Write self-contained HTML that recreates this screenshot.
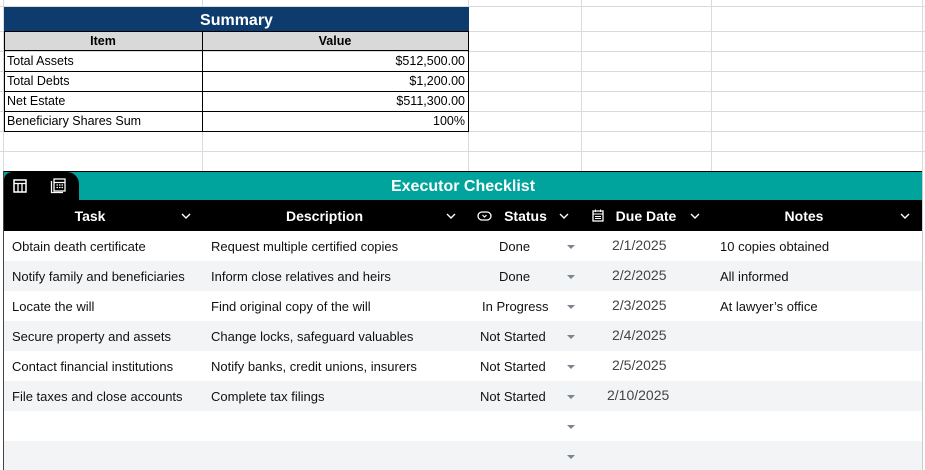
<!DOCTYPE html>
<html><head><meta charset="utf-8"><style>
*{margin:0;padding:0;box-sizing:border-box}
body{width:925px;height:470px;overflow:hidden;background:#fff;font-family:"Liberation Sans",sans-serif;position:relative}
.a{position:absolute}
.vl{position:absolute;top:0;width:1px;height:171px;background:#dadada}
.hl{position:absolute;left:0;width:925px;height:1px;background:#dadada}
.sum{position:absolute;font-size:12.5px;color:#000;line-height:21px;white-space:nowrap}
.hd{position:absolute;top:200px;height:31px;line-height:32px;color:#fff;font-weight:bold;font-size:14px;text-align:center}
.row{position:absolute;left:4px;width:918px;height:30px;font-size:13px;color:#111;line-height:31px}
.row span{position:absolute;white-space:nowrap}
.chev{position:absolute;top:211px;width:12px;height:10px}
.tri{position:absolute;width:0;height:0;border-left:4px solid transparent;border-right:4px solid transparent;border-top:4px solid #7a8590}
</style></head><body>
<div class="vl" style="left:3px"></div>
<div class="vl" style="left:202px"></div>
<div class="vl" style="left:468px"></div>
<div class="vl" style="left:581px"></div>
<div class="vl" style="left:711px"></div>
<div class="vl" style="left:922px"></div>
<div class="hl" style="top:6px"></div>
<div class="hl" style="top:31px"></div>
<div class="hl" style="top:51px"></div>
<div class="hl" style="top:71px"></div>
<div class="hl" style="top:91px"></div>
<div class="hl" style="top:111px"></div>
<div class="hl" style="top:131px"></div>
<div class="hl" style="top:151px"></div>

<div class="a" style="left:4px;top:7px;width:465px;height:24px;background:#0e3b6e;color:#fff;font-weight:bold;font-size:16px;text-align:center;line-height:27px">Summary</div>
<div class="a" style="left:4px;top:31px;width:465px;height:101px;border:1px solid #000"></div>
<div class="a" style="left:4px;top:31px;width:465px;height:20px;background:#d9d9d9;border:1px solid #000"></div>
<div class="a" style="left:202px;top:31px;width:1px;height:101px;background:#000"></div>
<div class="a" style="left:4px;top:71px;width:465px;height:1px;background:#000"></div>
<div class="a" style="left:4px;top:91px;width:465px;height:1px;background:#000"></div>
<div class="a" style="left:4px;top:111px;width:465px;height:1px;background:#000"></div>
<div class="sum" style="left:4px;top:31px;width:198px;text-align:center;font-weight:bold">Item</div>
<div class="sum" style="left:202px;top:31px;width:266px;text-align:center;font-weight:bold">Value</div>
<div class="sum" style="left:7px;top:51px">Total Assets</div>
<div class="sum" style="left:7px;top:71px">Total Debts</div>
<div class="sum" style="left:7px;top:91px">Net Estate</div>
<div class="sum" style="left:7px;top:111px">Beneficiary Shares Sum</div>
<div class="sum" style="left:202px;top:51px;width:263px;text-align:right">$512,500.00</div>
<div class="sum" style="left:202px;top:71px;width:263px;text-align:right">$1,200.00</div>
<div class="sum" style="left:202px;top:91px;width:263px;text-align:right">$511,300.00</div>
<div class="sum" style="left:202px;top:111px;width:263px;text-align:right">100%</div>

<div class="a" style="left:3px;top:171px;width:920px;height:299px;background:#fff;border-left:1px solid #444;border-right:1px solid #ccc"></div>
<div class="a" style="left:4px;top:171px;width:918px;height:1px;background:#000"></div>
<div class="a" style="left:4px;top:172px;width:918px;height:28px;background:#00a49c"></div>
<div class="a" style="left:4px;top:172px;width:75px;height:28px;background:#000;border-top-left-radius:8px;border-top-right-radius:12px"></div>
<div class="a" style="left:4px;top:172px;width:918px;height:28px;line-height:30px;text-align:center;color:#fff;font-weight:bold;font-size:16px">Executor Checklist</div>
<svg class="a" style="left:13px;top:179px" width="14" height="14" viewBox="0 0 14 14"><rect x="1" y="1" width="12" height="12" fill="none" stroke="#fff" stroke-width="1.5"/><path d="M1 4.5H13M5 4.5V13M9 4.5V13" stroke="#fff" stroke-width="1.3"/></svg>
<svg class="a" style="left:50px;top:178px" width="16" height="16" viewBox="0 0 16 16"><path d="M1.5 3V14.5H13" fill="none" stroke="#fff" stroke-width="1.3"/><rect x="4" y="1" width="11" height="12" fill="none" stroke="#fff" stroke-width="1.3"/><path d="M4 4.5H15M6.5 7h1.5M9 7h1.5M11.5 7h1.5M6.5 9.5h1.5M9 9.5h1.5M11.5 9.5h1.5" stroke="#fff" stroke-width="1.3"/></svg>
<div class="a" style="left:4px;top:200px;width:918px;height:31px;background:#000"></div>
<div class="hd" style="left:4px;width:172px">Task</div>
<div class="hd" style="left:202px;width:245px">Description</div>
<div class="hd" style="left:498px;width:55px">Status</div>
<div class="hd" style="left:614px;width:64px">Due Date</div>
<div class="hd" style="left:712px;width:184px">Notes</div>
<svg class="chev" style="left:180px" viewBox="0 0 12 10"><path d="M2 3l4 4 4-4" fill="none" stroke="#fff" stroke-width="1.4"/></svg>
<svg class="chev" style="left:445px" viewBox="0 0 12 10"><path d="M2 3l4 4 4-4" fill="none" stroke="#fff" stroke-width="1.4"/></svg>
<svg class="chev" style="left:558px" viewBox="0 0 12 10"><path d="M2 3l4 4 4-4" fill="none" stroke="#fff" stroke-width="1.4"/></svg>
<svg class="chev" style="left:689px" viewBox="0 0 12 10"><path d="M2 3l4 4 4-4" fill="none" stroke="#fff" stroke-width="1.4"/></svg>
<svg class="chev" style="left:899px" viewBox="0 0 12 10"><path d="M2 3l4 4 4-4" fill="none" stroke="#fff" stroke-width="1.4"/></svg>
<svg class="a" style="left:477px;top:210px" width="15" height="12" viewBox="0 0 15 12"><rect x="1" y="2" width="13" height="8" rx="4" fill="none" stroke="#fff" stroke-width="1.3"/><path d="M5.5 5l2 2 2-2" fill="none" stroke="#fff" stroke-width="1.2"/></svg>
<svg class="a" style="left:592px;top:209px" width="12" height="13" viewBox="0 0 12 13"><rect x="1" y="2" width="10" height="10" fill="none" stroke="#fff" stroke-width="1.3"/><path d="M1 5H11M3.5 0.5V3M8.5 0.5V3M3 7.5h6M3 9.5h6" stroke="#fff" stroke-width="1"/></svg>

<div class="row" style="top:231px;background:#fff"><span style="left:8px">Obtain death certificate</span><span style="left:207px">Request multiple certified copies</span><span style="left:495px">Done</span><span style="left:608px;font-size:14px;color:#444;top:-1px">2/1/2025</span><span style="left:716px">10 copies obtained</span></div>
<div class="row" style="top:261px;background:#f3f4f6"><span style="left:8px">Notify family and beneficiaries</span><span style="left:207px">Inform close relatives and heirs</span><span style="left:495px">Done</span><span style="left:608px;font-size:14px;color:#444;top:-1px">2/2/2025</span><span style="left:716px">All informed</span></div>
<div class="row" style="top:291px;background:#fff"><span style="left:8px">Locate the will</span><span style="left:207px">Find original copy of the will</span><span style="left:478px">In Progress</span><span style="left:608px;font-size:14px;color:#444;top:-1px">2/3/2025</span><span style="left:716px">At lawyer’s office</span></div>
<div class="row" style="top:321px;background:#f3f4f6"><span style="left:8px">Secure property and assets</span><span style="left:207px">Change locks, safeguard valuables</span><span style="left:476px">Not Started</span><span style="left:608px;font-size:14px;color:#444;top:-1px">2/4/2025</span></div>
<div class="row" style="top:351px;background:#fff"><span style="left:8px">Contact financial institutions</span><span style="left:207px">Notify banks, credit unions, insurers</span><span style="left:476px">Not Started</span><span style="left:608px;font-size:14px;color:#444;top:-1px">2/5/2025</span></div>
<div class="row" style="top:381px;background:#f3f4f6"><span style="left:8px">File taxes and close accounts</span><span style="left:207px">Complete tax filings</span><span style="left:476px">Not Started</span><span style="left:603px;font-size:14px;color:#444;top:-1px">2/10/2025</span></div>
<div class="row" style="top:411px;background:#fff"></div>
<div class="row" style="top:441px;background:#f3f4f6;height:29px"></div>
<div class="tri" style="left:567px;top:245px"></div>
<div class="tri" style="left:567px;top:275px"></div>
<div class="tri" style="left:567px;top:305px"></div>
<div class="tri" style="left:567px;top:335px"></div>
<div class="tri" style="left:567px;top:365px"></div>
<div class="tri" style="left:567px;top:395px"></div>
<div class="tri" style="left:567px;top:425px"></div>
<div class="tri" style="left:567px;top:455px"></div>
</body></html>
